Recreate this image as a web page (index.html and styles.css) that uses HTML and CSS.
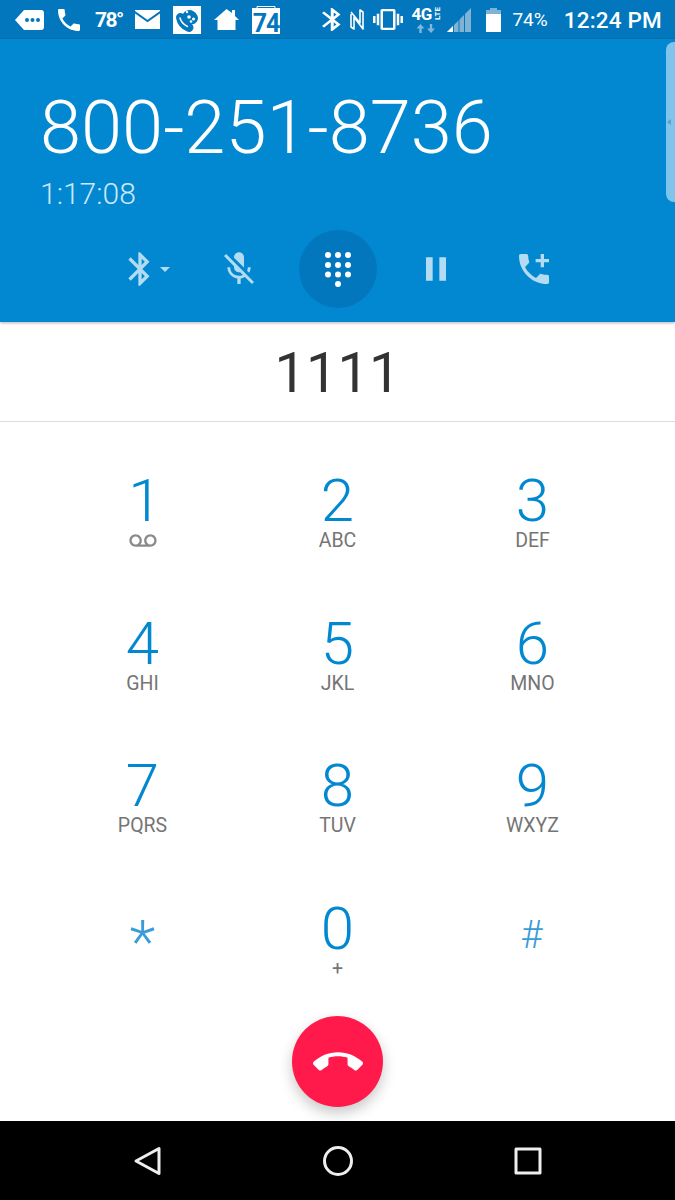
FILE: index.html
```html
<!DOCTYPE html>
<html lang="en">

<head>
    <meta charset="UTF-8">
    <meta name="viewport" content="width=device-width, initial-scale=1.0">
    <title>Phone call</title>
    <link rel="stylesheet" href="styles.css">
</head>

<body>
    <div class="status-bar">
        <div class="status-left">
            <svg class="ic-msg" viewBox="0 0 29 22"><path fill="#fff" d="M9 1h17a3 3 0 0 1 3 3v14a3 3 0 0 1-3 3H9L0 11z"/><circle cx="12" cy="11" r="2" fill="#0277bd"/><circle cx="17.5" cy="11" r="2" fill="#0277bd"/><circle cx="23" cy="11" r="2" fill="#0277bd"/></svg>
            <svg class="ic-phone" viewBox="3 3 18 18"><path fill="#fff" d="M6.62 10.79c1.44 2.83 3.76 5.14 6.59 6.59l2.2-2.2c.27-.27.67-.36 1.02-.24 1.12.37 2.33.57 3.57.57.55 0 1 .45 1 1V20c0 .55-.45 1-1 1-9.39 0-17-7.61-17-17 0-.55.45-1 1-1h3.5c.55 0 1 .45 1 1 0 1.25.2 2.45.57 3.57.11.35.03.74-.25 1.02l-2.2 2.2z"/></svg>
            <span class="temp">78°</span>
            <svg class="ic-mail" viewBox="0 0 25 19"><path fill="#fff" d="M0 0h25v19H0z"/><path fill="none" stroke="#0277bd" stroke-width="2" d="M-1 1.500 12.500 11 26 1.500"/></svg>
            <svg class="ic-app" viewBox="0 0 28 28"><path fill="#fff" d="M0 0h28v28H0z"/><path fill="none" stroke="#0277bd" stroke-width="9" stroke-linecap="round" d="M7.500 11.500c1 5 4 8 8.500 10"/><path fill="#0277bd" d="M10 8c2-4 7-5 10-3 2 1 5 4 5 7 0 3-2 5-4 6l-6 1c-3-3-5-7-5-11z"/><path fill="none" stroke="#fff" stroke-width="1.500" stroke-linecap="round" d="M7 12c1 4 3.500 6.500 7.500 8.500"/><circle cx="16" cy="11" r="1.800" fill="#fff"/><circle cx="20.500" cy="13" r="1.500" fill="#fff"/><circle cx="18" cy="15.500" r="1.300" fill="#fff"/><circle cx="14" cy="6" r="1.200" fill="#fff"/></svg>
            <svg class="ic-home" viewBox="0 0 25 21"><path fill="#fff" d="M12.500 0 18 4V1h3v6l4 4h-3.500v10h-18V11H0z"/></svg>
            <svg class="ic-cal" viewBox="0 0 28 28"><path fill="#fff" d="M0 2h28v26H0z"/><path fill="none" stroke="#fff" stroke-width="1" d="M5 2V.5h18V2"/><text class="cal-num" x="14" y="25.500" text-anchor="middle">74</text></svg>
        </div>
        <div class="status-right">
            <svg class="ic-bt" viewBox="5 2 13 20" preserveAspectRatio="none"><path fill="#fff" d="M17.710 7.710 12 2h-1v7.590L6.410 5 5 6.410 10.590 12 5 17.590 6.410 19 11 14.410V22h1l5.710-5.710-4.300-4.290 4.300-4.290zM13 5.830l1.880 1.880L13 9.590V5.830zm1.880 10.460L13 18.170v-3.760l1.880 1.880z"/></svg>
            <svg class="ic-nfc" viewBox="0 0 14 22"><path fill="none" stroke="#fff" stroke-width="1.600" stroke-linejoin="round" d="M1 5v13l3 2V8l9 12V3l-3-2v13L1 3"/></svg>
            <svg class="ic-vib" viewBox="0 0 24 18" preserveAspectRatio="none"><path fill="#fff" d="M0 12h2V6H0v6zm3 2h2V4H3v10zm19-8v6h2V6h-2zm-3 8h2V4h-2v10zM16.500 0h-9C6.670 0 6 .67 6 1.500v15c0 .83.67 1.500 1.500 1.500h9c.83 0 1.500-.67 1.500-1.500v-15c0-.83-.67-1.500-1.500-1.500zM16 16H8V2h8v14z"/></svg>
            <div class="net">
                <span class="net-type">4G<span class="net-lte">LTE</span></span>
                <svg class="ic-arrows" viewBox="0 0 20 9"><path fill="#7fb8dc" d="M4.500 0 8.500 4.500H5.700V9H3.300V4.500H.5zM15 9l-4-4.500h2.800V0h2.400v4.500H19z"/></svg>
            </div>
            <svg class="ic-signal" viewBox="0 0 24 24"><path fill="#7fb3d6" d="M24 0v24H0z"/><path fill="#fff" d="M0 24l6-6v6z"/><path fill="#0277bd" d="M6 0h1v24H6zM11.500 0h1v24h-1zM17 0h1v24h-1z"/></svg>
            <svg class="ic-batt" viewBox="0 0 15 24"><path fill="#7fb3d6" d="M4 0h7v2h4v4H0V2h4z"/><path fill="#fff" d="M0 6h15v18H0z"/></svg>
            <span class="batt-pct">74%</span>
            <span class="clock">12:24 PM</span>
        </div>
    </div>

    <header class="call-header">
        <div class="call-number">800-251-8736</div>
        <div class="call-time">1:17:08</div>
        <div class="call-actions">
            <div class="action">
                <svg class="ic-action ic-action-bt" viewBox="0 0 24 24"><path d="M17.710 7.710 12 2h-1v7.590L6.410 5 5 6.410 10.590 12 5 17.590 6.410 19 11 14.410V22h1l5.710-5.710-4.300-4.290 4.300-4.290zM13 5.830l1.880 1.880L13 9.590V5.830zm1.880 10.460L13 18.170v-3.760l1.880 1.880z"/></svg>
                <span class="caret"></span>
            </div>
            <div class="action">
                <svg class="ic-action ic-action-mic" viewBox="0 0 24 24"><path d="M19 11h-1.700c0 .74-.16 1.430-.43 2.050l1.230 1.230c.56-.98.9-2.090.9-3.280zm-4.020.17c0-.06.02-.11.02-.17V5c0-1.660-1.340-3-3-3S9 3.340 9 5v.18l5.980 5.990zM4.270 3 3 4.270l6.010 6.010V11c0 1.660 1.330 3 2.990 3 .22 0 .44-.03.65-.08l1.660 1.660c-.71.33-1.500.52-2.310.52-2.760 0-5.300-2.100-5.300-5.100H5c0 3.410 2.720 6.230 6 6.720V21h2v-3.280c.91-.13 1.770-.45 2.540-.9L19.730 21 21 19.730 4.270 3z"/></svg>
            </div>
            <div class="action action-on">
                <svg class="ic-dialpad" viewBox="0 0 30 36"><g fill="#fff"><circle cx="5" cy="4" r="3"/><circle cx="15" cy="4" r="3"/><circle cx="25" cy="4" r="3"/><circle cx="5" cy="14" r="3"/><circle cx="15" cy="14" r="3"/><circle cx="25" cy="14" r="3"/><circle cx="5" cy="23.500" r="3"/><circle cx="15" cy="23.500" r="3"/><circle cx="25" cy="23.500" r="3"/><circle cx="15" cy="33" r="3"/></g></svg>
            </div>
            <div class="action">
                <svg class="ic-action" viewBox="0 0 24 24"><path d="M6 5h4v14H6zM14 5h4v14h-4z"/></svg>
            </div>
            <div class="action">
                <svg class="ic-action" viewBox="0 0 24 24"><path d="M20 15.500c-1.250 0-2.450-.2-3.570-.57-.35-.11-.74-.03-1.020.24l-2.200 2.200c-2.830-1.440-5.150-3.750-6.590-6.590l2.200-2.210c.28-.26.36-.65.25-1C8.700 6.450 8.500 5.250 8.500 4c0-.55-.45-1-1-1H4c-.55 0-1 .45-1 1 0 9.390 7.610 17 17 17 .55 0 1-.45 1-1v-3.500c0-.55-.45-1-1-1zM21 6h-3V3h-2v3h-3v2h3v3h2V8h3z"/></svg>
            </div>
        </div>
        <div class="side-handle"><span class="handle-arrow"></span></div>
    </header>

    <main class="dialer">
        <div class="digits">1111</div>
        <div class="keypad">
            <div class="key"><span class="key-num key-one">1</span><svg class="ic-voicemail" viewBox="0 4 24 15"><path d="M18.500 6C15.460 6 13 8.460 13 11.500c0 1.330.47 2.550 1.260 3.500H9.740c.79-.95 1.260-2.170 1.260-3.500C11 8.460 8.540 6 5.500 6S0 8.460 0 11.500 2.460 17 5.500 17h13c3.040 0 5.500-2.460 5.500-5.500S21.540 6 18.500 6zm-13 9C3.570 15 2 13.430 2 11.500S3.570 8 5.500 8 9 9.570 9 11.500 7.430 15 5.500 15zm13 0c-1.930 0-3.500-1.570-3.500-3.500S16.570 8 18.500 8 22 9.570 22 11.500 20.430 15 18.500 15z"/></svg></div>
            <div class="key"><span class="key-num">2</span><span class="key-sub">ABC</span></div>
            <div class="key"><span class="key-num">3</span><span class="key-sub">DEF</span></div>
            <div class="key"><span class="key-num">4</span><span class="key-sub">GHI</span></div>
            <div class="key"><span class="key-num">5</span><span class="key-sub">JKL</span></div>
            <div class="key"><span class="key-num">6</span><span class="key-sub">MNO</span></div>
            <div class="key"><span class="key-num">7</span><span class="key-sub">PQRS</span></div>
            <div class="key"><span class="key-num">8</span><span class="key-sub">TUV</span></div>
            <div class="key"><span class="key-num">9</span><span class="key-sub">WXYZ</span></div>
            <div class="key"><span class="key-num key-star">*</span></div>
            <div class="key"><span class="key-num">0</span><span class="key-sub">+</span></div>
            <div class="key"><span class="key-num key-hash">#</span></div>
        </div>
        <div class="end-call">
            <svg class="ic-end" viewBox="0 6 24 11"><path d="M12 9c-1.600 0-3.150.25-4.600.72v3.100c0 .39-.23.74-.56.9-.98.49-1.870 1.120-2.660 1.850-.18.18-.43.28-.7.28-.28 0-.53-.11-.71-.29L.29 13.080c-.18-.17-.29-.42-.29-.7 0-.28.11-.53.29-.71C3.340 8.780 7.460 7 12 7s8.660 1.780 11.710 4.670c.18.18.29.43.29.71 0 .28-.11.53-.29.71l-2.480 2.480c-.18.18-.43.29-.71.29-.27 0-.52-.11-.7-.28-.79-.74-1.690-1.360-2.670-1.850-.33-.16-.56-.5-.56-.9v-3.100C15.150 9.250 13.600 9 12 9z"/></svg>
        </div>
    </main>

    <nav class="nav-bar">
        <svg class="ic-nav" viewBox="0 0 30 30"><path d="M26 2.500v25L3 15z"/></svg>
        <svg class="ic-nav" viewBox="0 0 30 30"><circle cx="15" cy="15" r="13.500"/></svg>
        <svg class="ic-nav" viewBox="0 0 30 30"><path d="M3 3h24v24H3z"/></svg>
    </nav>
</body>

</html>
```

FILE: styles.css
```css
* {
    box-sizing: border-box;
}

body {
    margin: 0;
    width: 675px;
    height: 1200px;
    overflow: hidden;
    display: flex;
    flex-direction: column;
    font-family: Roboto, "Liberation Sans", sans-serif;
    background-color: #fff;
}

svg {
    display: block;
    flex: none;
}

/* status bar */
.status-bar {
    height: 39px;
    flex: none;
    padding: 0 13px 0 15px;
    display: flex;
    align-items: center;
    justify-content: space-between;
    background-color: #0277bd;
    color: #fff;
}

.status-left,
.status-right {
    display: flex;
    align-items: center;
}

.ic-msg { width: 29px; height: 22px; }
.ic-phone { width: 22px; height: 22px; margin-left: 14px; }
.temp { width: 27px; margin-left: 15px; font-size: 21px; font-weight: 700; letter-spacing: -1.5px; }
.ic-mail { width: 25px; height: 19px; margin-left: 13px; }
.ic-app { width: 28px; height: 28px; margin-left: 13px; }
.ic-home { width: 25px; height: 21px; margin-left: 13px; }
.ic-cal { width: 28px; height: 28px; margin-left: 13px; }

.cal-num {
    font-family: Roboto, sans-serif;
    font-size: 25px;
    font-weight: 700;
    letter-spacing: -1px;
    fill: #0277bd;
}

.ic-bt { width: 19px; height: 23px; }
.ic-nfc { width: 14px; height: 22px; margin-left: 9px; }
.ic-vib { width: 30px; height: 21px; margin-left: 9px; }

.net {
    width: 32px;
    margin-left: 8px;
    display: flex;
    flex-direction: column;
    align-items: flex-start;
}

.net-type {
    display: flex;
    align-items: flex-start;
    font-size: 17px;
    line-height: 15px;
    font-weight: 700;
    letter-spacing: -0.5px;
}

.net-lte {
    margin-left: 1px;
    font-size: 8px;
    line-height: 9px;
    letter-spacing: 0;
    writing-mode: vertical-rl;
    transform: rotate(180deg);
}

.ic-arrows { width: 20px; height: 9px; margin: 2px 0 0 5px; }
.ic-signal { width: 24px; height: 24px; margin-left: 4px; }
.ic-batt { width: 15px; height: 24px; margin-left: 15px; }
.batt-pct { margin-left: 11px; font-size: 19px; }
.clock { margin-left: 16px; font-size: 22.500px; font-weight: 500; letter-spacing: 0.2px; }

/* call header */
.call-header {
    position: relative;
    height: 283px;
    flex: none;
    padding: 47px 0 0 40px;
    background-color: #0288d1;
    box-shadow: 0 1px 3px rgba(0, 0, 0, 0.3);
    color: #fff;
}

.call-number {
    font-size: 74px;
    line-height: 84px;
    font-weight: 300;
}

.call-time {
    margin-top: 7px;
    font-size: 30px;
    line-height: 34px;
    font-weight: 300;
    color: #cce7f7;
}

.call-actions {
    margin: 19px 0 0 -40px;
    display: flex;
    justify-content: center;
}

.action {
    position: relative;
    width: 98px;
    height: 78px;
    display: flex;
    align-items: center;
    justify-content: center;
}

.ic-action {
    width: 40px;
    height: 40px;
    fill: #b3dcf3;
}

.ic-action-bt { margin-left: -3px; }
.ic-action-mic { margin-left: -2px; }

.caret {
    position: absolute;
    left: 67px;
    top: 37px;
    border: 5px solid transparent;
    border-top-color: #b3dcf3;
    border-bottom: 0;
}

.action-on::before {
    content: "";
    position: absolute;
    left: 10px;
    top: 0;
    width: 78px;
    height: 78px;
    border-radius: 50%;
    background-color: #0277bd;
}

.ic-dialpad {
    position: relative;
    width: 30px;
    height: 36px;
}

.side-handle {
    position: absolute;
    right: 0;
    top: 3px;
    width: 9px;
    height: 160px;
    border-radius: 8px 0 0 8px;
    background-color: #7fc4ec;
    display: flex;
    align-items: center;
}

.handle-arrow {
    margin-left: 1px;
    border: 3px solid transparent;
    border-right: 4px solid #5f9fc8;
    border-left: 0;
}

/* dial pad */
.dialer {
    position: relative;
    flex: 1;
    min-height: 0;
}

.digits {
    height: 100px;
    border-bottom: 1px solid #dcdcdc;
    font-size: 56px;
    line-height: 102px;
    text-align: center;
    color: #333;
}

.keypad {
    padding: 49px 45px 0;
    display: grid;
    grid-template-columns: repeat(3, 195px);
    grid-auto-rows: 142.5px;
}

.key {
    display: flex;
    flex-direction: column;
    align-items: center;
}

.key-num {
    font-size: 60px;
    line-height: 60px;
    font-weight: 300;
    color: #0288d1;
}

.key-sub {
    font-size: 19.500px;
    line-height: 20px;
    color: #757575;
}

.key-one {
    margin-left: 5px;
}

.key-star,
.key-hash {
    color: #3a9bd9;
    position: relative;
}

.key-star {
    top: 13px;
}

.key-hash {
    top: 6px;
    left: -1px;
    font-size: 38px;
    line-height: 60px;
}

.ic-voicemail {
    width: 28px;
    height: 17px;
    margin-top: 1px;
    fill: #8a8a8a;
}

.end-call {
    position: absolute;
    left: 292px;
    bottom: 14px;
    width: 91px;
    height: 91px;
    border-radius: 50%;
    background-color: #ff1a4b;
    box-shadow: 0 6px 14px rgba(0, 0, 0, 0.22);
    display: flex;
    align-items: center;
    justify-content: center;
}

.ic-end {
    width: 50px;
    height: 23px;
    fill: #fff;
}

/* nav bar */
.nav-bar {
    height: 79px;
    flex: none;
    background-color: #000;
    display: flex;
    align-items: center;
    justify-content: center;
    gap: 160px;
}

.ic-nav {
    width: 30px;
    height: 30px;
    fill: none;
    stroke: #eee;
    stroke-width: 3;
    stroke-linejoin: round;
}
```
